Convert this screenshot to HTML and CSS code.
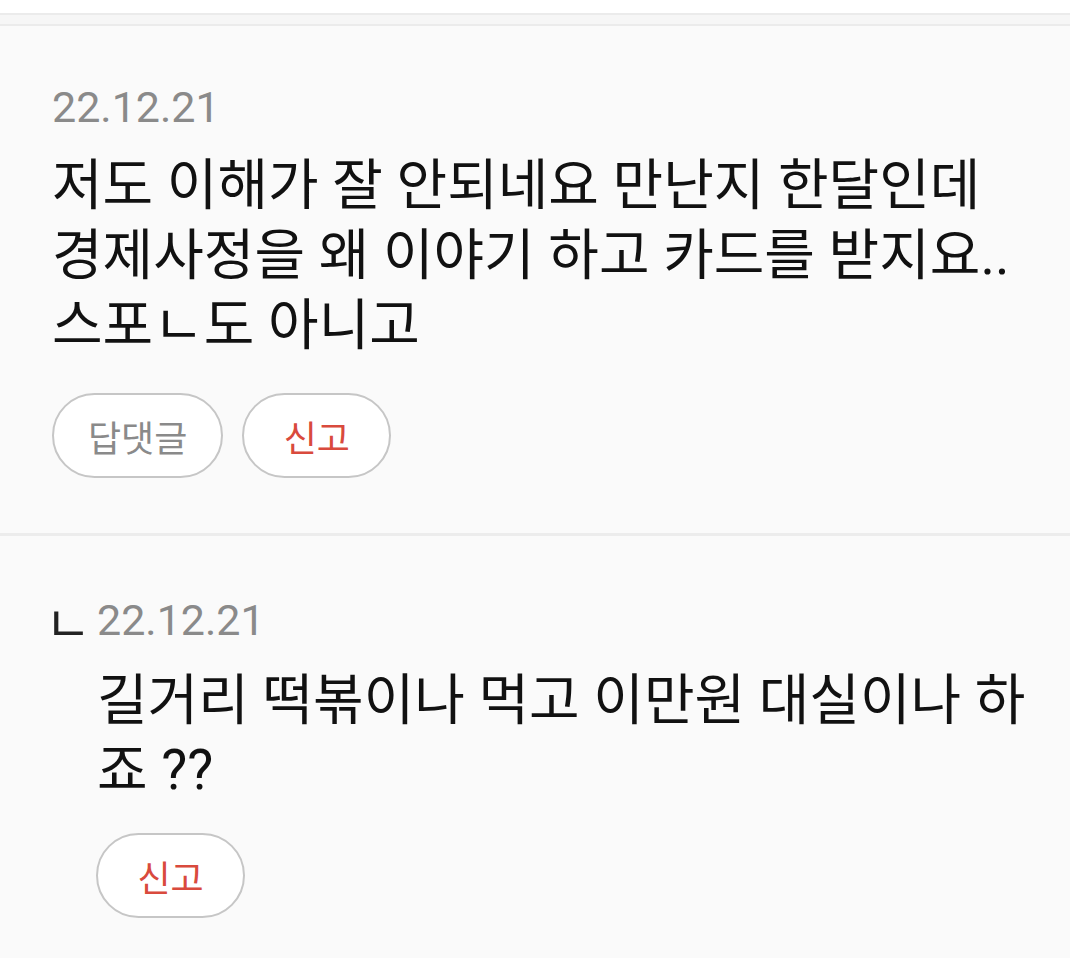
FILE: index.html
```html
<!DOCTYPE html>
<html lang="ko">
<head>
    <meta charset="UTF-8">
    <meta name="viewport" content="width=device-width, initial-scale=1.0">
    <title>댓글</title>
    <link rel="stylesheet" href="styles.css">
</head>
<body>
    <div class="top-strip"></div>
    <div class="top-band"></div>

    <!-- 댓글 -->
    <section class="comment">
        <div class="meta"><span class="date">22.12.21</span></div>
        <p class="body">저도 이해가 잘 안되네요 만난지 한달인데 경제사정을 왜 이야기 하고 카드를 받지요.. 스포ㄴ도 아니고</p>
        <div class="actions">
            <button class="pill">답댓글</button>
            <button class="pill report">신고</button>
        </div>
    </section>

    <!-- 답댓글 -->
    <section class="comment reply">
        <div class="meta"><span class="mark">ㄴ</span><span class="date">22.12.21</span></div>
        <p class="body">길거리 떡볶이나 먹고 이만원 대실이나 하죠 ??</p>
        <div class="actions">
            <button class="pill report">신고</button>
        </div>
    </section>
</body>
</html>
```

FILE: styles.css
```css
body {
    margin: 0;
    background: #fafafa;
    font-family: Roboto, "Noto Sans CJK KR", sans-serif;
    color: #111;
}

.top-strip {
    height: 13px;
    background: #fff;
    border-bottom: 2px solid #ebebeb;
}

.top-band {
    height: 9px;
    background: #f6f6f6;
    border-bottom: 2px solid #ebebeb;
}

.comment {
    padding: 56px 30px 55px 52px;
    border-bottom: 3px solid #ececec;
}

.reply {
    padding-top: 59px;
    border-bottom: none;
}

.meta {
    display: flex;
    align-items: center;
    height: 50px;
}

.date {
    font-family: Roboto, sans-serif;
    font-size: 43px;
    color: #8a8a8a;
}

.mark {
    font-family: "Noto Sans CJK KR", sans-serif;
    font-size: 50px;
    line-height: 50px;
    color: #222;
    width: 45px;
    margin-left: -7px;
    margin-right: 7px;
}

.body {
    margin: 18px 0 0;
    font-size: 55px;
    line-height: 70px;
}

.reply .body {
    margin: 20px 0 0 45px;
}

.actions {
    display: flex;
    gap: 19px;
    margin-top: 33px;
}

.reply .actions {
    margin: 28px 0 0 44px;
}

.pill {
    height: 85px;
    min-width: 149px;
    padding: 0 34px;
    background: #fff;
    border: 2px solid #c6c6c6;
    border-radius: 43px;
    font-family: "Noto Sans CJK KR", sans-serif;
    font-size: 36px;
    color: #8a8a8a;
}

.report {
    color: #d94a3d;
}
```
